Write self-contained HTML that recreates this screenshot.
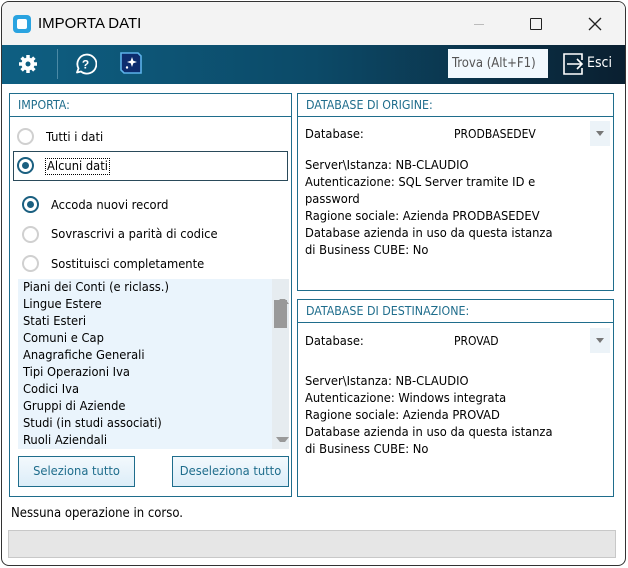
<!DOCTYPE html>
<html><head><meta charset="utf-8"><style>
*{margin:0;padding:0;box-sizing:border-box}
body{width:628px;height:568px;background:#fff;font-family:"DejaVu Sans Condensed","Liberation Sans",sans-serif;font-size:12.8px;color:#000;position:relative;overflow:hidden}
.win{position:absolute;left:1px;top:1px;width:625px;height:565px;border:1px solid #333;border-radius:8px;overflow:hidden;background:#fff}
.title{position:absolute;left:0;top:0;width:100%;height:43px;background:#f3f3f3}
.tb{position:absolute;left:0;top:43px;width:100%;height:39px;background:linear-gradient(90deg,#0e5f82 0%,#0c4a68 50%,#0a1f30 100%)}
.abs{position:absolute}
.panel{position:absolute;border:1px solid #1f6d8c}
.ph{height:23px;border-bottom:1px solid #1f6d8c;color:#1f6d8c;padding:4px 0 0 8px;font-size:12.3px}
.radio{position:absolute;width:17px;height:17px;border-radius:50%;border:2px solid #d0d0d0;background:#fff}
.radio.on{border-color:#1a5f80}
.radio.on::after{content:"";position:absolute;left:3px;top:3px;width:7px;height:7px;border-radius:50%;background:#1a5f80}
.list{position:absolute;left:18px;top:279px;width:271px;height:170px;background:#eaf4fc}
.list div{height:17px;padding-left:5px;line-height:17px}
.btn{position:absolute;height:31px;border:1px solid #1f6d8c;background:linear-gradient(#f3f9fd,#dcedf8);color:#1f6d8c;text-align:center;line-height:29px;font-size:12.8px}
.info{position:absolute;left:305px;line-height:17px}
.dd{position:absolute;width:20px;height:25px;background:#ecf3f8}
.dd::after{content:"";position:absolute;left:6px;top:10px;border:4px solid transparent;border-top:5px solid #777}
</style></head><body>
<div class="win">
<div class="title">
 <div class="abs" style="left:11px;top:13px;width:18px;height:18px;background:#2aa3e0;border-radius:4px"><div class="abs" style="left:4px;top:4px;width:10px;height:10px;background:#fff;border-radius:2px"></div></div>
 <div class="abs" style="left:36px;top:13px;font-family:'Liberation Sans',sans-serif;font-size:15px">IMPORTA DATI</div>
 <div class="abs" style="left:472px;top:22px;width:10px;height:1px;background:#bbb"></div>
 <div class="abs" style="left:528px;top:16px;width:12px;height:12px;border:1.5px solid #222;border-radius:1px"></div>
 <svg class="abs" style="left:586px;top:15px" width="14" height="14"><path d="M1 1L13 13M13 1L1 13" stroke="#222" stroke-width="1.3"/></svg>
</div>
<div class="tb">
 <svg class="abs" style="left:16px;top:9px" width="20" height="20" viewBox="0 0 20 20"><g fill="#fff"><circle cx="10" cy="10" r="6.5"/><g stroke="#fff" stroke-width="3.5"><path d="M10 1v18M1 10h18M3.6 3.6l12.8 12.8M16.4 3.6L3.6 16.4"/></g></g><circle cx="10" cy="10" r="2.5" fill="#0e5f82"/></svg>
 <div class="abs" style="left:55px;top:4px;width:1px;height:30px;background:#4b8aa6"></div>
 <svg class="abs" style="left:71px;top:7px" width="24" height="24" viewBox="0 0 24 24"><path d="M4 20.5 L5.5 16.5 A9.5 9.5 0 1 1 8 19.5 Z" fill="none" stroke="#fff" stroke-width="1.8" stroke-linejoin="round"/><text x="12.5" y="16.5" fill="#fff" font-size="12" font-family="Liberation Sans" text-anchor="middle" font-weight="bold">?</text></svg>
 <svg class="abs" style="left:116px;top:5px" width="26" height="26" viewBox="0 0 26 26"><path d="M3 3h17l3 3v17H6l-3-3z" fill="#0d2d6e" stroke="#5cb2ea" stroke-width="1.6"/><path d="M14 7l1.3 3.7L19 12l-3.7 1.3L14 17l-1.3-3.7L9 12l3.7-1.3z" fill="#fff"/><circle cx="9" cy="17.5" r="1.2" fill="#fff"/></svg>
 <div class="abs" style="left:446px;top:4px;width:100px;height:29px;background:#f2f9fe;color:#555;line-height:29px;padding-left:4px;font-size:13px">Trova (Alt+F1)</div>
 <svg class="abs" style="left:559px;top:7px" width="24" height="24" viewBox="0 0 24 24"><path d="M9 2H3v20h18v-6M21 8V2H9" fill="none" stroke="#fff" stroke-width="1.6"/><path d="M6 12h15M16 7l5 5-5 5" fill="none" stroke="#fff" stroke-width="1.6"/></svg>
 <div class="abs" style="left:585px;top:10px;color:#fff;font-size:14px">Esci</div>
</div>
</div>

<div class="panel" style="left:9px;top:93px;width:283px;height:404px"><div class="ph">IMPORTA:</div></div>
<div class="radio" style="left:17px;top:128px"></div><div class="abs" style="left:46px;top:130px">Tutti i dati</div>
<div class="abs" style="left:13px;top:151px;width:275px;height:30px;border:1px solid #2a4a5a"></div>
<div class="radio on" style="left:17px;top:157px"></div><div class="abs" style="left:45px;top:158px;border:1px dotted #000;padding:0 1px">Alcuni dati</div>
<div class="radio on" style="left:22px;top:196px"></div><div class="abs" style="left:51px;top:198px">Accoda nuovi record</div>
<div class="radio" style="left:22px;top:226px"></div><div class="abs" style="left:51px;top:227px">Sovrascrivi a parità di codice</div>
<div class="radio" style="left:22px;top:255px"></div><div class="abs" style="left:51px;top:257px">Sostituisci completamente</div>
<div class="list">
<div>Piani dei Conti (e riclass.)</div><div>Lingue Estere</div><div>Stati Esteri</div><div>Comuni e Cap</div><div>Anagrafiche Generali</div><div>Tipi Operazioni Iva</div><div>Codici Iva</div><div>Gruppi di Aziende</div><div>Studi (in studi associati)</div><div>Ruoli Aziendali</div>
<div class="abs" style="left:254px;top:0;width:17px;height:170px;background:#e6ecf0"></div>
<div class="abs" style="left:258px;top:8px;border:4px solid transparent;border-bottom:5px solid #999;border-top:0"></div>
<div class="abs" style="left:256px;top:21px;width:13px;height:28px;background:#999"></div>
<div class="abs" style="left:258px;top:158px;border:4px solid transparent;border-top:5px solid #999;border-bottom:0"></div>
</div>
<div class="btn" style="left:18px;top:456px;width:117px">Seleziona tutto</div>
<div class="btn" style="left:172px;top:456px;width:117px">Deseleziona tutto</div>

<div class="panel" style="left:297px;top:93px;width:317px;height:198px"><div class="ph">DATABASE DI ORIGINE:</div></div>
<div class="abs" style="left:305px;top:127px">Database:</div>
<div class="abs" style="left:454px;top:127px;font-size:12px">PRODBASEDEV</div>
<div class="dd" style="left:590px;top:121px"></div>
<div class="info" style="top:157px">Server\Istanza: NB-CLAUDIO<br>Autenticazione: SQL Server tramite ID e<br>password<br>Ragione sociale: Azienda PRODBASEDEV<br>Database azienda in uso da questa istanza<br>di Business CUBE: No</div>

<div class="panel" style="left:297px;top:299px;width:317px;height:198px"><div class="ph">DATABASE DI DESTINAZIONE:</div></div>
<div class="abs" style="left:305px;top:334px">Database:</div>
<div class="abs" style="left:454px;top:334px;font-size:12px">PROVAD</div>
<div class="dd" style="left:590px;top:328px"></div>
<div class="info" style="top:373px">Server\Istanza: NB-CLAUDIO<br>Autenticazione: Windows integrata<br>Ragione sociale: Azienda PROVAD<br>Database azienda in uso da questa istanza<br>di Business CUBE: No</div>

<div class="abs" style="left:11px;top:506px;font-size:13px">Nessuna operazione in corso.</div>
<div class="abs" style="left:8px;top:530px;width:608px;height:28px;background:#e6e6e6;border:1px solid #c8c8c8"></div>
</body></html>
